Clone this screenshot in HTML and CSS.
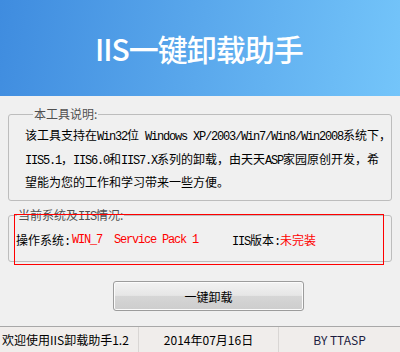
FILE: index.html
```html
<!DOCTYPE html>
<html lang="zh-CN">
<head>
<meta charset="utf-8">
<title>IIS一键卸载助手</title>
<link rel="stylesheet" href="styles.css">
</head>
<body>
<div class="app">
  <header class="banner">
    <h1 class="title">IIS一键卸载助手</h1>
  </header>

  <fieldset class="group intro">
    <legend class="legend">本工具说明:</legend>
    <div class="line">该工具支持在<span class="en">Win32</span>位<span class="en"> Windows XP/2003/Win7/Win8/Win2008</span>系统下，</div>
    <div class="line"><span class="en">IIS5.1</span>，<span class="en">IIS6.0</span>和<span class="en">IIS7.X</span>系列的卸载，由天天<span class="en">ASP</span>家园原创开发，希</div>
    <div class="line">望能为您的工作和学习带来一些方便。</div>
  </fieldset>

  <fieldset class="group status">
    <legend class="legend">当前系统及<span class="en">IIS</span>情况:</legend>
    <div class="redbox"><span class="item"><span class="label">操作系统<span class="en">:</span></span><span class="value en mono">WIN_7  Service Pack 1</span></span><span class="item iis"><span class="label"><span class="en">IIS</span>版本<span class="en">:</span></span><span class="value">未完装</span></span></div>
  </fieldset>

  <div class="actions">
    <button class="btn" type="button">一键卸载</button>
  </div>

  <footer class="statusbar">
    <div class="cell cell-left">欢迎使用IIS卸载助手1.2</div>
    <div class="cell cell-mid">2014年07月16日</div>
    <div class="cell cell-right">BY TTASP</div>
  </footer>
</div>
</body>
</html>
```

FILE: styles.css
```css
* { box-sizing: border-box; }

html, body {
  margin: 0;
  padding: 0;
}

body {
  width: 400px;
  height: 352px;
  overflow: hidden;
  background: #f0f0f0;
  font-family: "Noto Sans CJK SC", sans-serif;
  font-size: 12px;
  color: #000;
}

.app {
  display: flex;
  flex-direction: column;
  height: 352px;
}

.banner {
  flex: 0 0 96px;
  height: 96px;
  display: flex;
  align-items: center;
  padding-left: 95px;
  background: linear-gradient(100deg, #3f8cdf 0%, #5aa8ec 50%, #74c5fa 100%);
}

.title {
  margin: 0;
  color: #fff;
  font-family: "Noto Sans CJK SC", sans-serif;
  font-weight: 500;
  font-size: 30px;
  line-height: 1;
  letter-spacing: -1px;
}

.group {
  margin: 0 8px;
  padding: 0;
  border: 1px solid #bdbdbd;
  border-radius: 3px;
  min-width: 0;
  flex: 0 0 auto;
}

.legend {
  margin-left: 8px;
  padding: 0 1px;
  font-size: 12px;
  line-height: 16px;
  height: 16px;
  color: #505050;
}

.intro {
  margin-top: 10px;
  padding: 1px 0 7px 16px;
}

.line {
  white-space: pre;
  line-height: 23px;
  height: 23px;
}

.line:first-of-type {
  height: 24px;
  line-height: 24px;
}

.en {
  font-family: "Liberation Mono", monospace;
  font-size: 12px;
  letter-spacing: -1.2px;
}

.status {
  margin-top: 6px;
  padding: 0;
}

.redbox {
  position: relative;
  margin: -9px 0 -4px 5px;
  width: 370px;
  height: 51px;
  border: 1px solid red;
  display: flex;
  align-items: center;
  padding-left: 1px;
}

.item {
  display: flex;
  align-items: center;
  white-space: pre;
}

.iis {
  margin-left: 34px;
}

.value {
  color: #ff0000;
}

.mono {
  margin-left: 2px;
}

.actions {
  flex: 0 0 auto;
  margin-top: 19px;
  padding-left: 113px;
}

.btn {
  display: block;
  width: 191px;
  height: 30px;
  border: 1px solid #9c9c9c;
  border-radius: 3px;
  background: linear-gradient(#f2f2f2 0%, #e6e6e6 48%, #d6d6d6 50%, #cdcdcd 100%);
  box-shadow: inset 0 0 0 1px #fbfbfb;
  font-family: "Noto Sans CJK SC", sans-serif;
  font-size: 12px;
  color: #000;
  padding: 0;
}

.statusbar {
  margin-top: 15px;
  flex: 0 0 26px;
  height: 26px;
  border-top: 1px solid #a8a8a8;
  background: #f0edeb;
  display: flex;
}

.cell {
  display: flex;
  align-items: center;
  line-height: 1;
  font-size: 12px;
}

.cell-left {
  width: 139px;
  padding-left: 2px;
  border-right: 1px solid #d9d6d4;
}

.cell-mid {
  width: 140px;
  justify-content: center;
  border-right: 1px solid #d9d6d4;
}

.cell-right {
  flex: 1;
  justify-content: center;
  color: #1c1c40;
}
```
